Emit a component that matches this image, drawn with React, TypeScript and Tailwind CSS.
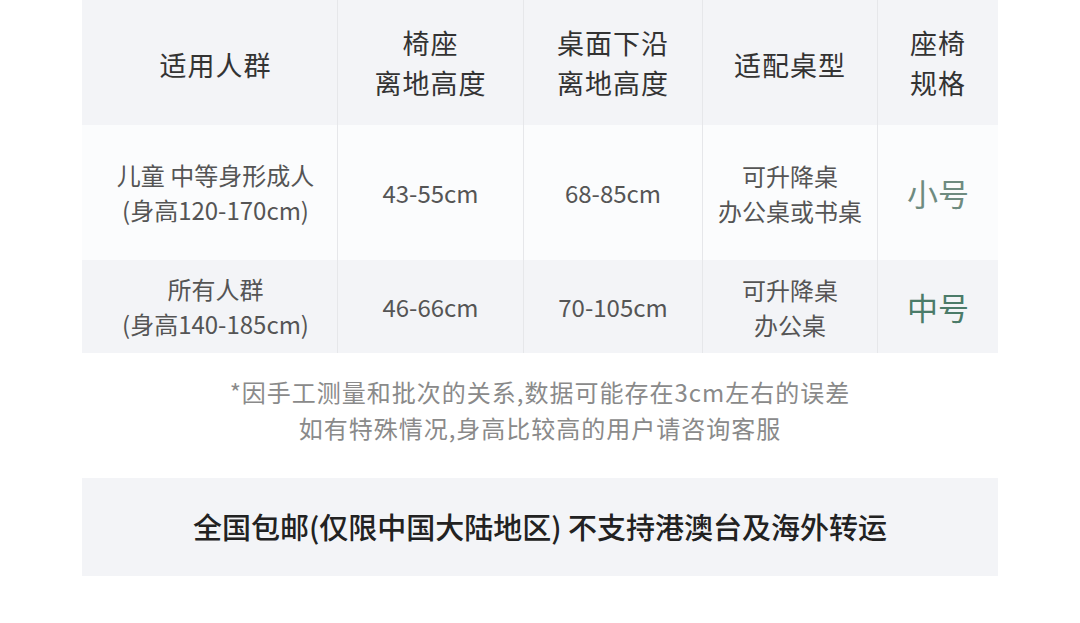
import React from 'react';

const font = { fontFamily: '"Noto Sans CJK SC", "Noto Sans", sans-serif' };

const rows = [
  {
    crowd: ['儿童 中等身形成人', '(身高120-170cm)'],
    seat: '43-55cm',
    desk: '68-85cm',
    deskType: ['可升降桌', '办公桌或书桌'],
    size: '小号',
    sizeColor: 'text-[#6e8b80]',
    bg: 'bg-[#fbfcfd]',
    h: 'h-[135px]',
  },
  {
    crowd: ['所有人群', '(身高140-185cm)'],
    seat: '46-66cm',
    desk: '70-105cm',
    deskType: ['可升降桌', '办公桌'],
    size: '中号',
    sizeColor: 'text-[#4b7b69]',
    bg: 'bg-[#f3f4f7]',
    h: 'h-[93px]',
  },
];

const cell = 'flex flex-col items-center justify-center text-center';
const divider = 'border-l border-[#e6e7ea]';

const App = () => {
  return (
    <div className="bg-white w-[1080px] h-[623px] overflow-hidden" style={font}>
      <div className="mx-[82px] w-[916px]">
        {/* header */}
        <div className="grid grid-cols-[255px_186px_179px_175px_121px] h-[125px] bg-[#f3f4f7] text-[27px] tracking-[1px] leading-[40px] text-[#333]">
          <div className={`${cell} pl-[12px] pt-[4px]`}>适用人群</div>
          <div className={`${cell} ${divider}`}>
            <span>椅座</span>
            <span>离地高度</span>
          </div>
          <div className={`${cell} ${divider}`}>
            <span>桌面下沿</span>
            <span>离地高度</span>
          </div>
          <div className={`${cell} ${divider} pt-[4px]`}>适配桌型</div>
          <div className={`${cell} ${divider}`}>
            <span>座椅</span>
            <span>规格</span>
          </div>
        </div>

        {/* rows */}
        {rows.map((r, i) => (
          <div
            key={i}
            className={`grid grid-cols-[255px_186px_179px_175px_121px] ${r.h} ${r.bg} text-[24px] leading-[35px] text-[#555]`}
          >
            <div className={`${cell} pl-[12px] pb-[2px]`}>
              {r.crowd.map(t => (
                <span key={t}>{t}</span>
              ))}
            </div>
            <div className={`${cell} ${divider}`}>{r.seat}</div>
            <div className={`${cell} ${divider}`}>{r.desk}</div>
            <div className={`${cell} ${divider}`}>
              {r.deskType.map(t => (
                <span key={t}>{t}</span>
              ))}
            </div>
            <div className={`${cell} ${divider} text-[31px] ${r.sizeColor}`}>{r.size}</div>
          </div>
        ))}

        {/* notes */}
        <div className="pt-[21px] text-center text-[24px] tracking-[1px] leading-[36px] text-[#8a8a8a]">
          <p>*因手工测量和批次的关系,数据可能存在3cm左右的误差</p>
          <p>如有特殊情况,身高比较高的用户请咨询客服</p>
        </div>

        {/* shipping */}
        <div className="mt-[32px] h-[98px] bg-[#f3f4f7] flex items-center justify-center text-[29px] font-medium text-[#222]">
          全国包邮(仅限中国大陆地区) 不支持港澳台及海外转运
        </div>
      </div>
    </div>
  );
};

export default App;
